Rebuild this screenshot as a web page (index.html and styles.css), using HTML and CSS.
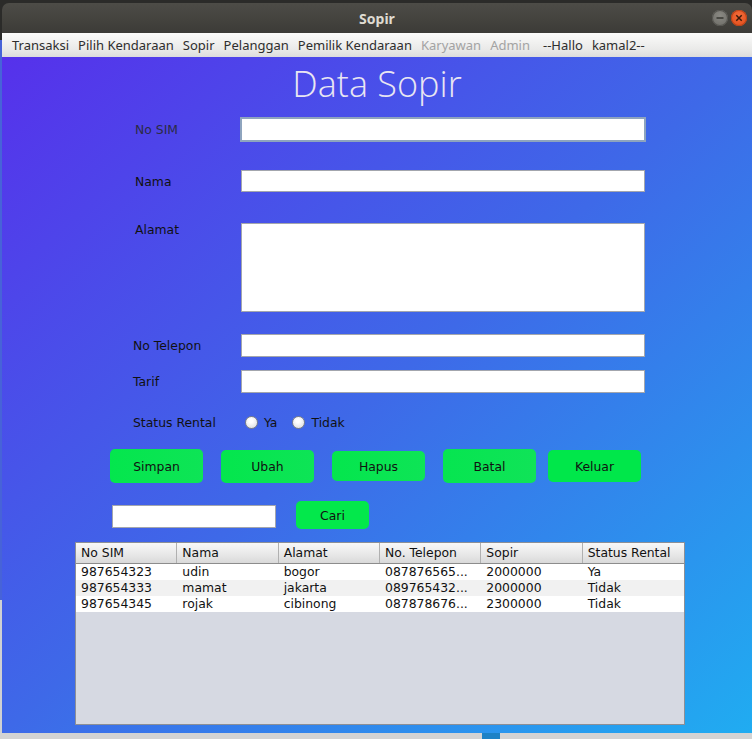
FILE: index.html
```html
<!DOCTYPE html>
<html lang="id">
<head>
<meta charset="utf-8">
<title>Sopir</title>
<link rel="stylesheet" href="styles.css">
</head>
<body>
<div class="window">
  <div class="titlebar">
    <span class="title">Sopir</span>
    <div class="controls">
      <span class="ctl ctl-min"><svg width="16" height="16" viewBox="0 0 16 16"><line x1="4.5" y1="8" x2="11.5" y2="8" stroke="#3c3b37" stroke-width="1.6"/></svg></span>
      <span class="ctl ctl-close"><svg width="16" height="16" viewBox="0 0 16 16"><path d="M5.3 5.3 L10.7 10.7 M10.7 5.3 L5.3 10.7" stroke="#3c1a0a" stroke-width="1.5"/></svg></span>
    </div>
  </div>
  <div class="menubar">
    <span class="mi">Transaksi</span>
    <span class="mi">Pilih Kendaraan</span>
    <span class="mi">Sopir</span>
    <span class="mi">Pelanggan</span>
    <span class="mi">Pemilik Kendaraan</span>
    <span class="mi mi-off">Karyawan</span>
    <span class="mi mi-off">Admin</span>
    <span class="mi mi-hallo">--Hallo</span>
    <span class="mi">kamal2--</span>
  </div>
  <div class="content">
    <h1 class="heading">Data Sopir</h1>

    <div class="row r-sim">
      <label class="lbl lbl-in">No SIM</label>
      <div class="field field-focus"></div>
    </div>
    <div class="row r-nama">
      <label class="lbl lbl-in">Nama</label>
      <div class="field f-nama"></div>
    </div>
    <div class="row r-alamat">
      <label class="lbl lbl-in lbl-top">Alamat</label>
      <div class="field f-alamat"></div>
    </div>
    <div class="row r-telp">
      <label class="lbl">No Telepon</label>
      <div class="field f-23"></div>
    </div>
    <div class="row r-tarif">
      <label class="lbl">Tarif</label>
      <div class="field f-23"></div>
    </div>
    <div class="row r-status">
      <label class="lbl">Status Rental</label>
      <div class="radios">
        <span class="radio"></span><span class="rtext">Ya</span>
        <span class="radio"></span><span class="rtext">Tidak</span>
      </div>
    </div>

    <div class="buttons">
      <button class="btn b-simpan">Simpan</button>
      <button class="btn b-ubah">Ubah</button>
      <button class="btn b-hapus">Hapus</button>
      <button class="btn b-batal">Batal</button>
      <button class="btn b-keluar">Keluar</button>
    </div>

    <div class="search">
      <div class="field f-search"></div>
      <button class="btn b-cari">Cari</button>
    </div>

    <div class="table">
      <div class="thead">
        <div class="th">No SIM</div>
        <div class="th">Nama</div>
        <div class="th">Alamat</div>
        <div class="th">No. Telepon</div>
        <div class="th">Sopir</div>
        <div class="th">Status Rental</div>
      </div>
      <div class="tr">
        <div class="td">987654323</div><div class="td">udin</div><div class="td">bogor</div><div class="td">087876565...</div><div class="td">2000000</div><div class="td">Ya</div>
      </div>
      <div class="tr tr-alt">
        <div class="td">987654333</div><div class="td">mamat</div><div class="td">jakarta</div><div class="td">089765432...</div><div class="td">2000000</div><div class="td">Tidak</div>
      </div>
      <div class="tr">
        <div class="td">987654345</div><div class="td">rojak</div><div class="td">cibinong</div><div class="td">087878676...</div><div class="td">2300000</div><div class="td">Tidak</div>
      </div>
    </div>
  </div>
</div>
<div class="strip"><span class="strip-blue"></span></div>
</body>
</html>
```
FILE: styles.css
```css
html, body {
  margin: 0;
  padding: 0;
}
body {
  width: 752px;
  height: 739px;
  overflow: hidden;
  background: linear-gradient(#2b2b29 0 40px, #4763d8 40px 600px, #cfd0d2 600px);
  font-family: "DejaVu Sans", sans-serif;
}
.window {
  margin-left: 2px;
  padding-top: 3px;
  width: 750px;
}
.titlebar {
  height: 30px;
  background: linear-gradient(#4d4c47, #3c3b37);
  border-radius: 7px 7px 0 0;
  display: flex;
  align-items: center;
  justify-content: center;
  position: relative;
}
.title {
  font-family: "Noto Sans", "Open Sans", sans-serif;
  font-weight: 700;
  font-size: 14px;
  color: #dfdbd2;
}
.controls {
  position: absolute;
  right: 5px;
  top: 7px;
  display: flex;
  gap: 3px;
}
.ctl {
  width: 16px;
  height: 16px;
  border-radius: 50%;
  display: block;
}
.ctl svg { display: block; }
.ctl-min {
  background: radial-gradient(circle at 50% 35%, #8a8983, #6a6964);
  box-shadow: inset 0 0 0 1px #55544f;
}
.ctl-close {
  background: radial-gradient(circle at 50% 35%, #f46b3b, #df4a16);
  box-shadow: inset 0 0 0 1px #b8431a;
}
.menubar {
  height: 24px;
  background: linear-gradient(#fbfbfa, #e9e9e8 70%, #dcdcdc);
  display: flex;
  align-items: center;
  padding-left: 10px;
  font-family: "Noto Sans", "Open Sans", sans-serif;
  font-size: 13px;
  color: #2e2e2e;
  box-sizing: border-box;
}
.mi { margin-right: 9px; }
.mi-off { color: #a3a3a3; }
.mi-hallo { margin-left: 4px; }
.content {
  height: 676px;
  background: linear-gradient(to bottom right, #5631eb 0%, #3e69e8 50%, #20acf1 100%);
  display: flex;
  flex-direction: column;
  font-size: 12.4px;
  color: #111;
}
.heading {
  margin: 0;
  height: 54px;
  line-height: 54px;
  text-align: center;
  font-family: "Open Sans", "Noto Sans", sans-serif;
  font-weight: 300;
  font-size: 36px;
  color: #e9e6f2;
}
.row {
  display: flex;
  align-items: center;
  padding-left: 131px;
}
.lbl {
  width: 108px;
  flex: none;
  color: #111;
}
.lbl-in { padding-left: 2px; width: 106px; }
.lbl-top { align-self: flex-start; margin-top: -1px; }
.r-sim .lbl { color: #2b2b45; }
.field {
  width: 404px;
  height: 22px;
  background: #fff;
  border: 1px solid #a3a6ad;
  box-sizing: border-box;
}
.r-sim { margin-top: 6px; }
.field-focus {
  width: 406px;
  height: 25px;
  margin-left: -1px;
  border: 2px solid #8ea4be;
}
.r-nama { margin-top: 28px; }
.r-alamat { margin-top: 31px; }
.f-alamat { height: 89px; }
.r-telp { margin-top: 22px; }
.f-23 { height: 23px; }
.r-tarif { margin-top: 13px; }
.r-status { margin-top: 21px; height: 16px; }
.radios {
  display: flex;
  align-items: center;
  margin-left: 4px;
}
.radio {
  width: 13px;
  height: 13px;
  border-radius: 50%;
  box-sizing: border-box;
  border: 1px solid #7f8287;
  background: radial-gradient(circle at 45% 35%, #ffffff 20%, #d6d7da 100%);
}
.rtext { margin-left: 6px; margin-right: 15px; }
.buttons {
  margin-top: 19px;
  height: 34px;
  display: flex;
  align-items: center;
  padding-left: 108px;
}
.btn {
  width: 93px;
  border: none;
  border-radius: 5px;
  background: #06e54e;
  font-family: "DejaVu Sans", sans-serif;
  font-size: 12.4px;
  color: #111;
  padding: 0;
  flex: none;
}
.b-simpan { height: 34px; background: linear-gradient(to right, #04e64d, #0ee456); }
.b-ubah { height: 33px; margin-left: 18px; background: linear-gradient(to right, #04e64d, #0ee456); }
.b-hapus { height: 30px; margin-left: 18px; background: linear-gradient(to right, #04e64d, #0ee456); }
.b-batal { height: 34px; margin-left: 18px; background: linear-gradient(to right, #06e550, #10e358); }
.b-keluar { height: 32px; margin-left: 12px; background: #00e74a; }
.search {
  margin-top: 18px;
  height: 28px;
  display: flex;
  align-items: center;
  padding-left: 110px;
}
.f-search {
  width: 164px;
  height: 23px;
  margin-top: 2px;
}
.b-cari {
  width: 73px;
  height: 28px;
  margin-left: 20px;
  background: #03e84b;
}
.table {
  margin-top: 13px;
  margin-left: 73px;
  width: 610px;
  height: 183px;
  box-sizing: border-box;
  border: 1px solid #8c8f96;
  background: #d6d9e2;
}
.thead, .tr {
  display: grid;
  grid-template-columns: repeat(6, 1fr);
  width: 608px;
}
.thead {
  height: 21px;
  background: linear-gradient(#f8f8f8, #e7e7e7 60%, #d9d9d9);
  border-bottom: 1px solid #8c8c8c;
  box-sizing: border-box;
}
.th {
  padding-left: 5px;
  line-height: 20px;
  border-right: 1px solid #b0b0b0;
  color: #111;
}
.th:last-child { border-right: none; }
.tr {
  height: 16px;
  background: #fff;
}
.tr-alt { background: #f1f1f1; }
.td {
  padding-left: 5px;
  line-height: 16px;
  color: #111;
  white-space: nowrap;
  overflow: hidden;
}
.strip {
  height: 6px;
  background: #d3d3d3;
  position: relative;
}
.strip-blue {
  position: absolute;
  left: 482px;
  top: 0;
  width: 18px;
  height: 6px;
  background: #1d82c6;
}
```
